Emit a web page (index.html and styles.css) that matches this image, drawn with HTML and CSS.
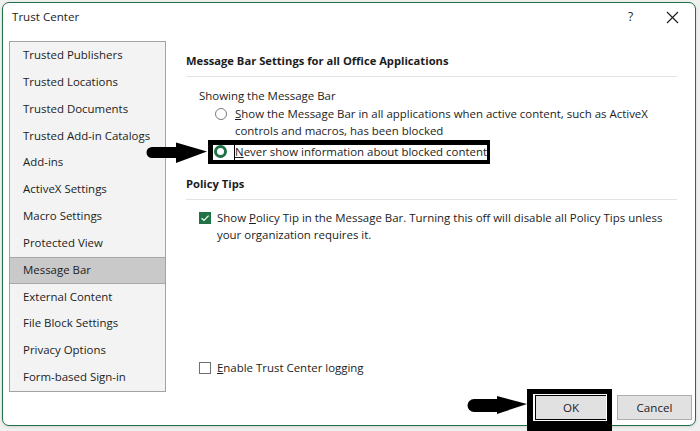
FILE: index.html
```html
<!DOCTYPE html>
<html>
<head>
<meta charset="utf-8">
<link rel="stylesheet" href="styles.css">
</head>
<body>
<div class="dialog">
  <div class="titlebar">
    <span class="title">Trust Center</span>
    <span class="help">?</span>
    <span class="close"><svg width="13" height="13" viewBox="0 0 13 13"><path d="M1 1 L12 12 M12 1 L1 12" stroke="#1a1a1a" stroke-width="1.1" fill="none"/></svg></span>
  </div>
  <div class="main">
    <ul class="nav">
      <li class="nav-item">Trusted Publishers</li>
      <li class="nav-item">Trusted Locations</li>
      <li class="nav-item">Trusted Documents</li>
      <li class="nav-item">Trusted Add-in Catalogs</li>
      <li class="nav-item">Add-ins</li>
      <li class="nav-item">ActiveX Settings</li>
      <li class="nav-item">Macro Settings</li>
      <li class="nav-item">Protected View</li>
      <li class="nav-item selected">Message Bar</li>
      <li class="nav-item">External Content</li>
      <li class="nav-item">File Block Settings</li>
      <li class="nav-item">Privacy Options</li>
      <li class="nav-item">Form-based Sign-in</li>
    </ul>
    <div class="panel">
      <div class="section-h">Message Bar Settings for all Office Applications</div>
      <div class="rule"></div>
      <div class="group-label">Showing the Message Bar</div>
      <div class="option radio-opt first">
        <span class="radio"></span>
        <span class="label"><u>S</u>how the Message Bar in all applications when active content, such as ActiveX<br>controls and macros, has been blocked</span>
      </div>
      <div class="option radio-opt second">
        <span class="radio on"></span>
        <span class="label focus"><u>N</u>ever show information about blocked content</span>
      </div>
      <div class="section-h policy">Policy Tips</div>
      <div class="rule"></div>
      <div class="option check-opt">
        <span class="check on"><svg width="12" height="12" viewBox="0 0 12 12"><path d="M2.6 6.2 L5 8.5 L9.6 3.6" stroke="#fff" stroke-width="1.2" fill="none"/></svg></span>
        <span class="label">Show <u>P</u>olicy Tip in the Message Bar. Turning this off will disable all Policy Tips unless<br>your organization requires it.</span>
      </div>
      <div class="option check-opt logging">
        <span class="check"></span>
        <span class="label"><u>E</u>nable Trust Center logging</span>
      </div>
    </div>
  </div>
  <div class="footer">
    <button class="btn ok">OK</button>
    <button class="btn">Cancel</button>
  </div>
</div>

<svg class="arrow arrow-never" width="64" height="25" viewBox="0 0 64 25">
  <path d="M7 7 H33 V18 H7 A5.5 5.5 0 0 1 7 7 Z" fill="#000"/>
  <path d="M31 2.5 L62 11.5 L31 23 Z" fill="#000"/>
</svg>
<div class="frame frame-never"></div>

<svg class="arrow arrow-ok" width="62" height="22" viewBox="0 0 62 22">
  <path d="M8 5 H33 V18 H8 A6.5 6.5 0 0 1 8 5 Z" fill="#000"/>
  <path d="M31 2 L61 10 L31 20 Z" fill="#000"/>
</svg>
<div class="frame frame-ok"></div>
</body>
</html>
```
FILE: styles.css
```css
* { box-sizing: border-box; }
html, body { margin: 0; padding: 0; }
body {
  width: 700px;
  height: 431px;
  position: relative;
  background: #f0f0f0;
  font-family: "Open Sans", "Noto Sans", sans-serif;
  font-size: 11.45px;
  color: #1c1c1c;
  overflow: hidden;
}
.dialog {
  position: absolute;
  left: 2px;
  top: 2px;
  width: 694px;
  height: 424px;
  background: #fff;
  border: 1px solid #1f7145;
  border-radius: 7px;
  display: flex;
  flex-direction: column;
  box-shadow: 0 1px 3px rgba(0,0,0,0.12);
}
.titlebar {
  height: 26px;
  display: flex;
  align-items: center;
  padding-left: 9px;
  padding-right: 16px;
}
.title { flex: 1; font-size: 11.6px; padding-top: 1px; }
.help { width: 7px; font-size: 12px; margin-right: 31px; padding-top: 1px; }
.close { width: 13px; height: 13px; display: flex; margin-top: 2px; }
.main {
  margin-top: 12px;
  height: 351px;
  display: flex;
}
.nav {
  list-style: none;
  margin: 0 0 0 6px;
  padding: 0;
  width: 157px;
  height: 351px;
  border: 1px solid #a3a3a3;
  background: #f3f3f3;
}
.nav-item {
  height: 26.85px;
  line-height: 26px;
  padding-left: 13px;
  white-space: nowrap;
}
.nav-item.selected {
  background: #c9c9c9;
  border-top: 1px solid #a8a8a8;
  border-bottom: 1px solid #a8a8a8;
  line-height: 24px;
}
.panel {
  flex: 1;
  margin-left: 20px;
  margin-right: 18px;
  display: flex;
  flex-direction: column;
  padding-bottom: 16px;
}
.section-h {
  font-weight: 700;
  line-height: 16px;
  margin-top: 12px;
  font-size: 11.2px;
}
.section-h.policy { margin-top: 16px; }
.rule {
  height: 1px;
  background: #e2e2e2;
  margin-top: 7px;
}
.group-label {
  margin-top: 10px;
  margin-left: 13px;
  line-height: 17px;
}
.option {
  display: flex;
  align-items: flex-start;
  line-height: 17px;
  white-space: nowrap;
}
.radio-opt { margin-left: 29px; }
.radio-opt.first { margin-top: 1px; }
.radio-opt.second { margin-top: 4px; }
.radio {
  width: 12px;
  height: 12px;
  border-radius: 50%;
  border: 1px solid #7b7b7b;
  margin-top: 2.5px;
  margin-right: 8px;
  flex: none;
  background: #fff;
}
.radio.on {
  border: 3.5px solid #1e7145;
  width: 13px;
  height: 13px;
  margin-top: 2px;
  margin-left: -1px;
}
.label.focus { outline: 1px solid #000; outline-offset: 0; }
.check-opt { margin-left: 13px; margin-top: 9px; }
.check {
  width: 12px;
  height: 12px;
  border: 1px solid #6f6f6f;
  background: #fff;
  margin-top: 2.5px;
  margin-right: 6px;
  flex: none;
  display: flex;
}
.check.on { background: #217346; border-color: #217346; }
.check.on svg { margin: -1px; }
.logging { margin-top: auto; }
.footer {
  margin-top: 3px;
  height: 25px;
  display: flex;
  justify-content: flex-end;
  gap: 10px;
  padding-right: 3px;
}
.btn {
  height: 25px;
  width: 75px;
  background: #e1e1e1;
  border: 1px solid #adadad;
  font-family: inherit;
  font-size: 11.6px;
  color: #1c1c1c;
  padding: 0;
}
.btn.ok { width: 72px; border-color: #000; }
.arrow { position: absolute; }
.arrow-never { left: 145px; top: 140px; }
.arrow-ok { left: 466px; top: 394px; }
.frame { position: absolute; pointer-events: none; }
.frame-never {
  left: 208px;
  top: 140px;
  width: 282px;
  height: 24px;
  border-style: solid;
  border-color: #000;
  border-width: 5px 3px 4px 5px;
}
.frame-ok {
  left: 527px;
  top: 389px;
  width: 85px;
  height: 42px;
  border-style: solid;
  border-color: #000;
  border-width: 5px 5px 10px 6px;
  box-shadow: inset 0 0 0 1px #fff;
}
```
